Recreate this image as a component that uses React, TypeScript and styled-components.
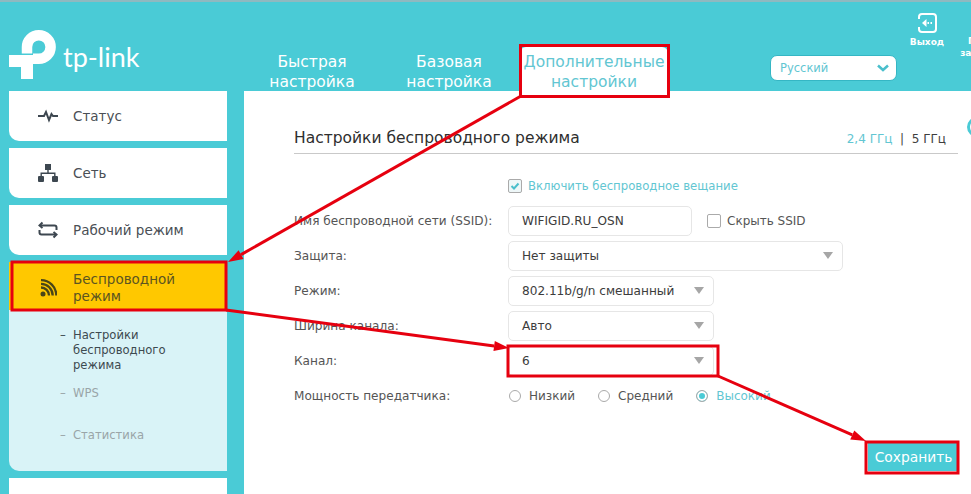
import React from "react";
import styled, { createGlobalStyle } from "styled-components";

const TEAL = "#4acbd6";
const RED = "#e6000f";

const GlobalStyle = createGlobalStyle`
  html, body {
    margin: 0;
    padding: 0;
    background: #fff;
    font-family: "DejaVu Sans", Verdana, sans-serif;
  }
`;

const Page = styled.div`
  position: relative;
  width: 971px;
  height: 494px;
  overflow: hidden;
  background: ${TEAL};
`;

const Header = styled.header`
  display: flex;
  height: 89px;
  border-top: 2px solid #8fb9c0;
`;

const Logo = styled.div`
  display: flex;
  align-items: flex-start;
  width: 241px;
  padding: 27px 0 0 9px;
  box-sizing: border-box;
  flex: none;
`;

const Wordmark = styled.span`
  margin: 11px 0 0 6px;
  font-family: "Lato", sans-serif;
  font-size: 27px;
  line-height: 34px;
  color: #fff;
`;

const Tab = styled.div<{ $active?: boolean; $width: number; $gap?: number }>`
  width: ${(p) => p.$width}px;
  flex: none;
  box-sizing: border-box;
  margin: 45px 0 0 ${(p) => p.$gap ?? 0}px;
  padding-top: 5px;
  border-radius: 6px 6px 0 0;
  text-align: center;
  font-size: 15.5px;
  line-height: 20px;
  color: ${(p) => (p.$active ? "#62c6d2" : "#fff")};
  background: ${(p) => (p.$active ? "#fff" : "transparent")};
`;

const Lang = styled.div`
  display: flex;
  align-items: center;
  justify-content: space-between;
  flex: none;
  box-sizing: border-box;
  width: 127px;
  height: 26px;
  margin: 53px 0 0 102px;
  padding: 0 7px 0 9px;
  background: #fff;
  border: 1px solid #35b6c4;
  border-radius: 7px;
  font-size: 11.5px;
  color: #62c6d2;
`;

const HeadAction = styled.div<{ $gap: number }>`
  display: flex;
  flex-direction: column;
  align-items: center;
  flex: none;
  width: 36px;
  margin: 11px 0 0 ${(p) => p.$gap}px;
  font-size: 9px;
  line-height: 12px;
  font-weight: bold;
  color: #fff;
  text-align: center;
  white-space: nowrap;

  svg {
    margin-bottom: 3px;
  }
`;

const ActionSpacer = styled.div`
  height: 22px;
`;

const Body = styled.div`
  display: flex;
  align-items: flex-start;
  height: 403px;
`;

const Sidebar = styled.nav`
  width: 218px;
  margin: 0 17px 0 9px;
  flex: none;
`;

const MenuItem = styled.div<{ $active?: boolean }>`
  display: flex;
  align-items: center;
  box-sizing: border-box;
  height: ${(p) => (p.$active ? 48 : 50)}px;
  margin-bottom: ${(p) => (p.$active ? 0 : 7)}px;
  padding: ${(p) => (p.$active ? "3px 0 0 28px" : "0 0 0 28px")};
  background: ${(p) => (p.$active ? "#ffc800" : "#fff")};
  border-radius: ${(p) => (p.$active ? 0 : "0 0 0 10px")};
  font-size: 13.5px;
  line-height: 17px;
  color: ${(p) => (p.$active ? "#5c5520" : "#4a4f55")};
`;

const MenuIcon = styled.span`
  display: flex;
  align-items: center;
  justify-content: center;
  width: 22px;
  margin-right: 14px;
  flex: none;
`;

const SubMenu = styled.div`
  height: 161px;
  box-sizing: border-box;
  padding-top: 18px;
  margin-bottom: 7px;
  background: #d9f3f7;
  border-radius: 0 0 0 10px;
`;

const SubItem = styled.div<{ $current?: boolean; $mb: number }>`
  display: flex;
  margin-bottom: ${(p) => p.$mb}px;
  padding-left: 51px;
  font-size: 11.6px;
  line-height: 15px;
  color: ${(p) => (p.$current ? "#3d4a50" : "#9aa5a8")};

  &::before {
    content: "–";
    width: 13px;
    flex: none;
  }
`;

const Main = styled.main`
  flex: 1;
  height: 403px;
  box-sizing: border-box;
  padding: 0 13px 0 50px;
  background: #fff;
`;

const TitleBar = styled.div`
  display: flex;
  align-items: flex-end;
  justify-content: space-between;
  height: 63px;
  box-sizing: border-box;
  padding: 0 12px 5px 0;
  margin-bottom: 14px;
  border-bottom: 1px solid #c9c9c9;
`;

const Title = styled.h2`
  margin: 0;
  font-size: 15.5px;
  line-height: 20px;
  font-weight: normal;
  color: #2e2e2e;
`;

const Bands = styled.div`
  font-size: 12px;
  line-height: 18px;
  color: #3e3e3e;
`;

const ActiveBand = styled.span`
  color: #62c6d2;
`;

const Row = styled.div`
  display: flex;
  align-items: center;
  height: 35px;
`;

const Label = styled.label`
  width: 214px;
  flex: none;
  padding-top: 1px;
  font-size: 12.1px;
  color: #555;
`;

const Field = styled.div<{ $width: number }>`
  display: flex;
  align-items: center;
  justify-content: space-between;
  box-sizing: border-box;
  width: ${(p) => p.$width}px;
  height: 30px;
  padding: 0 9px 0 13px;
  border: 1px solid #e6e6e6;
  border-radius: 5px;
  font-size: 12.1px;
  color: #3c3c3c;
`;

const Caret = styled.i`
  width: 0;
  height: 0;
  border-left: 5.5px solid transparent;
  border-right: 5.5px solid transparent;
  border-top: 7px solid #a6a6a6;
`;

const Check = styled.span<{ $on?: boolean }>`
  display: flex;
  align-items: center;
  justify-content: center;
  width: 12px;
  height: 12px;
  margin-right: 6px;
  flex: none;
  border: 1px solid #aaa;
  border-radius: 2px;
  background: ${(p) => (p.$on ? "#eef7f8" : "#fff")};
`;

const CheckLabel = styled.span<{ $on?: boolean; $gap?: number; $size?: number }>`
  display: flex;
  align-items: center;
  margin-left: ${(p) => p.$gap ?? 0}px;
  font-size: ${(p) => p.$size ?? 12}px;
  color: ${(p) => (p.$on ? "#62c6d2" : "#555")};
`;

const Radio = styled.span<{ $on?: boolean }>`
  width: 10px;
  height: 10px;
  margin: 0 8px 0 1px;
  flex: none;
  border-radius: 50%;
  border: 1px solid #aaa;
  background: ${(p) => (p.$on ? TEAL : "#fff")};
  box-shadow: ${(p) => (p.$on ? "inset 0 0 0 2px #fff" : "none")};
`;

const SaveRow = styled.div`
  display: flex;
  justify-content: flex-end;
  margin: 29px 1px 0 0;
`;

const SaveButton = styled.button`
  width: 89px;
  height: 29px;
  padding: 0 0 0 2px;
  border: 0;
  background: ${TEAL};
  color: #fff;
  font-family: inherit;
  font-size: 13.8px;
`;

const HelpRing = styled.span`
  position: absolute;
  left: 967px;
  top: 117px;
  width: 14px;
  height: 14px;
  border: 3px solid ${TEAL};
  border-radius: 50%;
`;

const Overlay = styled.svg`
  position: absolute;
  left: 0;
  top: 0;
  pointer-events: none;
`;

const Arrow = ({ x1, y1, x2, y2 }: { x1: number; y1: number; x2: number; y2: number }) => {
  const angle = Math.atan2(y2 - y1, x2 - x1);
  const len = 15;
  const half = 5;
  const bx = x2 - len * Math.cos(angle);
  const by = y2 - len * Math.sin(angle);
  const nx = -Math.sin(angle) * half;
  const ny = Math.cos(angle) * half;
  return (
    <g>
      <line x1={x1} y1={y1} x2={bx} y2={by} stroke={RED} strokeWidth={3} />
      <polygon points={`${x2},${y2} ${bx + nx},${by + ny} ${bx - nx},${by - ny}`} fill={RED} />
    </g>
  );
};

const PulseIcon = () => (
  <svg width="22" height="14" viewBox="0 0 22 14" fill="none" stroke="#3d4750" strokeWidth="2">
    <path d="M1 7h6l2-4 3 8 2.5-6 1.5 2H21" />
  </svg>
);

const NetIcon = () => (
  <svg width="20" height="18" viewBox="0 0 20 18" fill="#3d4750">
    <rect x="7" y="0" width="6" height="6" />
    <rect x="0" y="12" width="6" height="6" rx="1" />
    <rect x="14" y="12" width="6" height="6" rx="1" />
    <path d="M9.3 6h1.4v2.5H17.5V12h-1.4V9.9H3.9V12H2.5V8.5H9.3z" />
  </svg>
);

const SwapIcon = () => (
  <svg width="20" height="18" viewBox="0 0 20 18" fill="none" stroke="#3d4750" strokeWidth="2">
    <path d="M4.5 1.5L1.5 4.5L4.5 7" />
    <path d="M2 4.5h14.5q2 0 2 2V9" />
    <path d="M15.5 16.5l3-3-3-2.5" />
    <path d="M18 13.5H3.5q-2 0-2-2V9" />
  </svg>
);

const WifiIcon = () => (
  <svg width="17" height="18" viewBox="0 0 17 18" fill="none" stroke="#4a4618" strokeWidth="2.3">
    <circle cx="3" cy="15" r="2.5" fill="#4a4618" stroke="none" />
    <path d="M1 8.5a8 8 0 0 1 8 8" />
    <path d="M1 4.8a11.7 11.7 0 0 1 11.7 11.7" />
    <path d="M1 1.2a15.3 15.3 0 0 1 15.3 15.3" />
  </svg>
);

const ExitIcon = () => (
  <svg width="20" height="20" viewBox="0 0 20 20" fill="none" stroke="#fff" strokeWidth="2">
    <path d="M2 6V4q0-3 3-3h11q3 0 3 3v12q0 3-3 3H5q-3 0-3-3v-2" />
    <path d="M9.5 6L5 10l4.5 4z" fill="#fff" stroke="none" />
    <path d="M10.5 10h1.5M13.5 10h1.5" />
  </svg>
);

const App = () => (
  <Page>
    <GlobalStyle />
    <Header>
      <Logo>
        <svg width="48" height="51" viewBox="9 29 48 51">
          <path d="M27 53.5V47a11.8 11.8 0 1 1 11.8 11.8H33" fill="none" stroke="#fff" strokeWidth="10.5" />
          <path d="M21 55h12v24H21V67H9V55z" fill="#fff" />
        </svg>
        <Wordmark>tp-link</Wordmark>
      </Logo>
      <Tab $width={136} $gap={3}>Быстрая<br />настройка</Tab>
      <Tab $width={138}>Базовая<br />настройка</Tab>
      <Tab $width={148} $gap={2} $active>Дополнительные<br />настройки</Tab>
      <Lang>
        Русский
        <svg width="12" height="8" viewBox="0 0 12 8" fill="none" stroke="#4abfcc" strokeWidth="2.5">
          <path d="M1 1.5l5 4.5 5-4.5" />
        </svg>
      </Lang>
      <HeadAction $gap={12}>
        <ExitIcon />
        Выход
      </HeadAction>
      <HeadAction $gap={20}>
        <ActionSpacer />
        Пере-<br />загрузка
      </HeadAction>
    </Header>
    <Body>
      <Sidebar>
        <MenuItem><MenuIcon><PulseIcon /></MenuIcon>Статус</MenuItem>
        <MenuItem><MenuIcon><NetIcon /></MenuIcon>Сеть</MenuItem>
        <MenuItem><MenuIcon><SwapIcon /></MenuIcon>Рабочий режим</MenuItem>
        <MenuItem $active><MenuIcon><WifiIcon /></MenuIcon><span>Беспроводной<br />режим</span></MenuItem>
        <SubMenu>
          <SubItem $current $mb={13}><span>Настройки<br />беспроводного<br />режима</span></SubItem>
          <SubItem $mb={27}>WPS</SubItem>
          <SubItem $mb={0}>Статистика</SubItem>
        </SubMenu>
        <MenuItem />
      </Sidebar>
      <Main>
        <TitleBar>
          <Title>Настройки беспроводного режима</Title>
          <Bands><ActiveBand>2,4 ГГц</ActiveBand> &nbsp;|&nbsp; 5 ГГц</Bands>
        </TitleBar>
        <Row>
          <Label />
          <CheckLabel $on $size={11.7}>
            <Check $on>
              <svg width="10" height="10" viewBox="0 0 10 10" fill="none" stroke="#4abfcc" strokeWidth="2">
                <path d="M1.5 5l2.5 2.5 4.5-5" />
              </svg>
            </Check>
            Включить беспроводное вещание
          </CheckLabel>
        </Row>
        <Row>
          <Label>Имя беспроводной сети (SSID):</Label>
          <Field $width={184}>WIFIGID.RU_OSN</Field>
          <CheckLabel $gap={15}><Check />Скрыть SSID</CheckLabel>
        </Row>
        <Row>
          <Label>Защита:</Label>
          <Field $width={335}>Нет защиты<Caret /></Field>
        </Row>
        <Row>
          <Label>Режим:</Label>
          <Field $width={206}>802.11b/g/n смешанный<Caret /></Field>
        </Row>
        <Row>
          <Label>Ширина канала:</Label>
          <Field $width={206}>Авто<Caret /></Field>
        </Row>
        <Row>
          <Label>Канал:</Label>
          <Field $width={206}>6<Caret /></Field>
        </Row>
        <Row>
          <Label>Мощность передатчика:</Label>
          <CheckLabel><Radio />Низкий</CheckLabel>
          <CheckLabel $gap={22}><Radio />Средний</CheckLabel>
          <CheckLabel $gap={22} $on><Radio $on />Высокий</CheckLabel>
        </Row>
        <SaveRow>
          <SaveButton>Сохранить</SaveButton>
        </SaveRow>
      </Main>
    </Body>
    <HelpRing />
    <Overlay width="971" height="494" viewBox="0 0 971 494" fill="none">
      <rect x="520.5" y="45.5" width="148" height="51" stroke={RED} strokeWidth="3" />
      <rect x="12" y="262" width="214" height="48" stroke={RED} strokeWidth="3" />
      <rect x="508" y="346" width="210" height="30" stroke={RED} strokeWidth="3" />
      <rect x="866" y="442" width="92" height="31" stroke={RED} strokeWidth="3" />
      <Arrow x1={521} y1={96} x2={228} y2={262} />
      <Arrow x1={226} y1={310} x2={509} y2={348} />
      <Arrow x1={718} y1={376} x2={866} y2={441} />
    </Overlay>
  </Page>
);

export default App;
